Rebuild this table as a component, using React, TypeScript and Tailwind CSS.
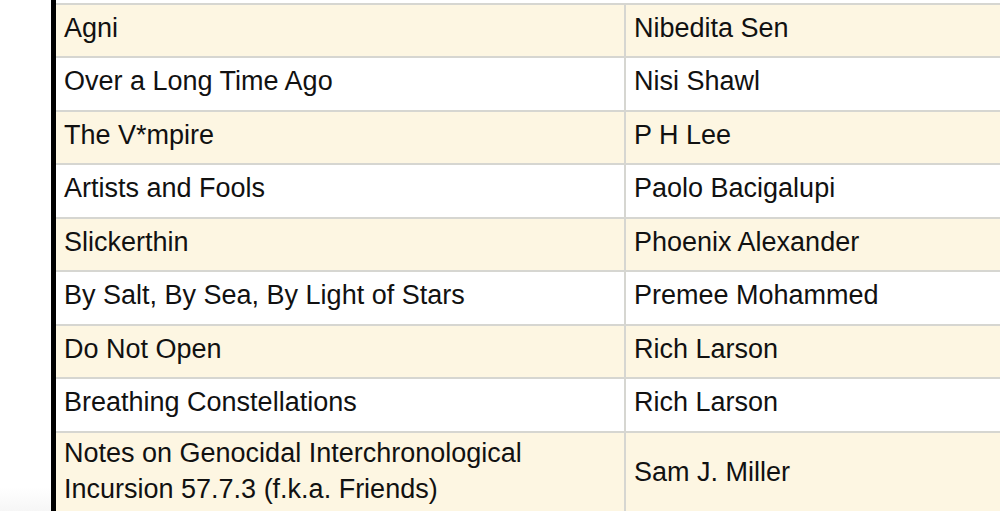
const rows: [string[], string][] = [
  [["Agni"], "Nibedita Sen"],
  [["Over a Long Time Ago"], "Nisi Shawl"],
  [["The V*mpire"], "P H Lee"],
  [["Artists and Fools"], "Paolo Bacigalupi"],
  [["Slickerthin"], "Phoenix Alexander"],
  [["By Salt, By Sea, By Light of Stars"], "Premee Mohammed"],
  [["Do Not Open"], "Rich Larson"],
  [["Breathing Constellations"], "Rich Larson"],
  [
    ["Notes on Genocidal Interchronological", "Incursion 57.7.3 (f.k.a. Friends)"],
    "Sam J. Miller",
  ],
];

export default function App() {
  return (
    <div
      className="w-full h-[511px] overflow-hidden bg-white flex text-[27px] text-[#111]"
      style={{ fontFamily: '"Liberation Sans", Arial, sans-serif' }}
    >
      <div className="w-[51px] shrink-0 flex flex-col justify-end">
        <div className="h-[24px] bg-gradient-to-b from-white to-[#f6f6f6]" />
      </div>
      <div className="flex-1 border-l-[5px] border-black flex flex-col">
        <div className="h-[3px] shrink-0 bg-white" />
        {rows.map(([title, author], i) => {
          const cream = i % 2 === 0;
          const multi = title.length > 1;
          return (
            <div
              key={i}
              className={`grid grid-cols-[570px_1fr] border-t-2 border-[#d6d6d1] shrink-0 ${
                cream ? "bg-[#fdf6e2]" : "bg-white"
              } ${multi ? "" : "h-[53.44px]"}`}
            >
              <div
                className={`border-r-2 border-[#d6d6d1] pl-2 leading-[36px] ${
                  multi ? "pt-[2px] pb-[8px]" : "pt-[5px]"
                }`}
              >
                {title.map((t) => (
                  <div key={t}>{t}</div>
                ))}
              </div>
              <div
                className={`pl-2 leading-[36px] ${
                  multi ? "flex items-center pt-[2px] pb-[6px]" : "pt-[5px]"
                }`}
              >
                {author}
              </div>
            </div>
          );
        })}
      </div>
    </div>
  );
}
